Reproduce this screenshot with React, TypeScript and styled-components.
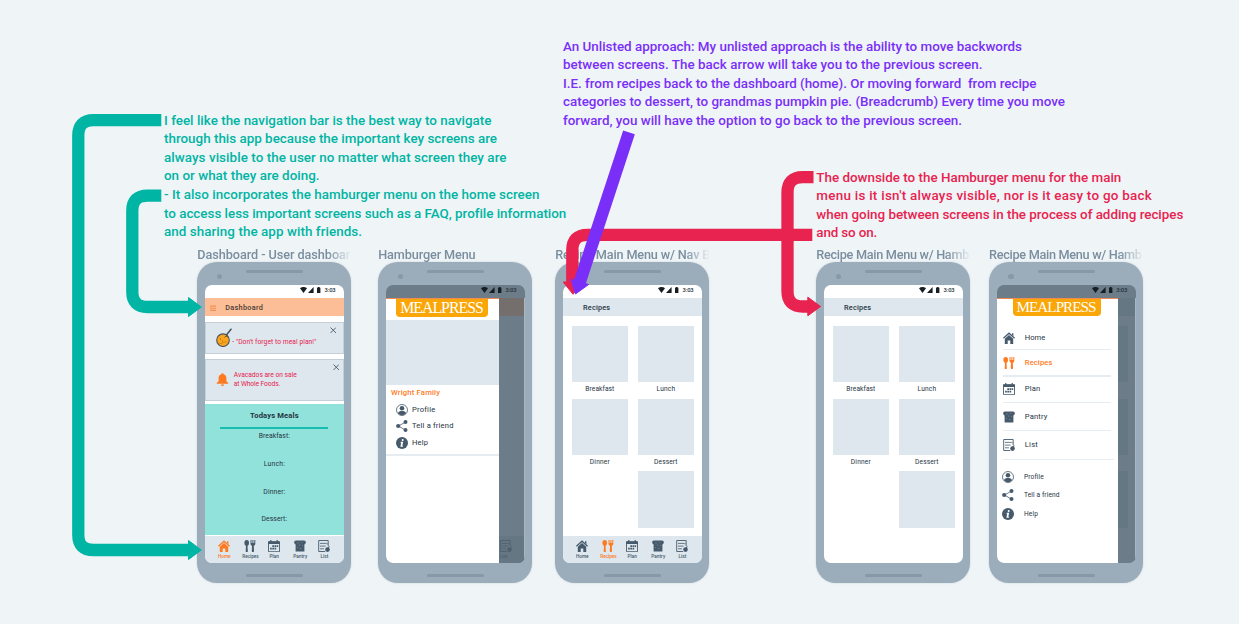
import React, { useLayoutEffect, useRef } from "react";
import styled, { createGlobalStyle, css } from "styled-components";

const GlobalStyle = createGlobalStyle`
  *, *::before, *::after { box-sizing: border-box; }
  body { margin: 0; background: #eff4f7; font-family: Roboto, "Liberation Sans", sans-serif; }
`;

const C = {
  teal: "#00b5a3",
  red: "#e8234f",
  purple: "#7a2ff9",
  orange: "#ff7a1f",
  slate: "#465a6b",
  ink: "#26333f",
  body: "#9badbb",
  tile: "#dde7ed",
};

const Board = styled.main`
  position: relative;
  width: 1239px;
  height: 624px;
  overflow: hidden;
  background: #eff4f7;
`;

/* Text */

const Run = styled.span<{ $size: number; $color?: string; $weight?: number; $serif?: boolean }>`
  display: inline-block;
  flex: none;
  white-space: pre;
  font-size: ${(p) => p.$size}px;
  font-weight: ${(p) => p.$weight ?? 500};
  color: ${(p) => p.$color ?? C.ink};
  ${(p) => p.$serif && css`font-family: "Liberation Serif", serif;`}
`;

type FitProps = { children: string; width: number; size: number; color?: string; weight?: number; serif?: boolean };

/* Tracks a run of text so that it spans the given width. */
function Fit({ children, width, size, color, weight, serif }: FitProps) {
  const ref = useRef<HTMLSpanElement>(null);
  useLayoutEffect(() => {
    const el = ref.current;
    if (!el) return;
    el.style.letterSpacing = "0px";
    const gap = (width - el.getBoundingClientRect().width) / Math.max(1, children.length - 1);
    el.style.letterSpacing = `${gap}px`;
    el.style.marginRight = `${-gap}px`;
  }, [children, width]);
  return (
    <Run ref={ref} $size={size} $color={color} $weight={weight} $serif={serif}>
      {children}
    </Run>
  );
}

const NoteBox = styled.section<{ $x: number; $y: number }>`
  position: absolute;
  left: ${(p) => p.$x}px;
  top: ${(p) => p.$y}px;
  display: flex;
  flex-direction: column;
  align-items: flex-start;
  line-height: 18.6px;
`;

function Note({ x, y, color, lines }: { x: number; y: number; color: string; lines: [string, number][] }) {
  return (
    <NoteBox $x={x} $y={y}>
      {lines.map(([text, width]) => (
        <Fit key={text} width={width} size={13.4} color={color}>{text}</Fit>
      ))}
    </NoteBox>
  );
}

/* Icons */

const Svg = styled.svg<{ $size: number }>`
  display: block;
  flex: none;
  width: ${(p) => p.$size}px;
  height: ${(p) => p.$size}px;
`;

type IconName = "home" | "recipes" | "plan" | "pantry" | "list" | "profile" | "share" | "help" | "bell" | "close" | "menu";

function Icon({ name, size = 12, color = C.slate }: { name: IconName; size?: number; color?: string }) {
  const stroke = { fill: "none", stroke: color };
  return (
    <Svg $size={size} viewBox="0 0 12 12" fill={color}>
      {name === "home" && (
        <>
          <path d="M.4 6.3 6 1.200l5.600 5.100" {...stroke} strokeWidth="1.300" />
          <path d="M9 1.200h1.400v3L9 3z" />
          <path d="M1.800 6.800 6 2.900l4.200 3.900V12H7.300V8.400H4.700V12H1.800z" />
        </>
      )}
      {name === "recipes" && (
        <>
          <ellipse cx="2.700" cy="2.900" rx="2.300" ry="2.800" />
          <path d="M2 5h1.500l.3 6.200a1 1 0 0 1-2.100 0z" />
          <path d="M6.500 0h1v3h.9V0h1v3h.9V0h1v3.400c0 1.200-.6 2-1.500 2.300l.2 5.400a1.100 1.100 0 0 1-2.200 0L8 5.700C7 5.400 6.500 4.600 6.500 3.400z" />
        </>
      )}
      {name === "plan" && (
        <>
          <path d="M.5 1.700h11v10H.5z" {...stroke} strokeWidth=".9" />
          <path d="M.3 1.400h11.400v2.500H.3z" />
          <path d="M2.200 0h1.200v2H2.200zM8.600 0h1.200v2H8.600z" />
          <path d="M4.300 5.200h1.700v1.700H4.300zM6.500 5.200h1.700v1.700H6.500zM8.700 5.200h1.500v1.700H8.700zM2.100 7.700h1.700v1.700H2.100zM4.300 7.700h1.700v1.700H4.300zM6.500 7.700h1.700v1.700H6.500z" />
        </>
      )}
      {name === "pantry" && (
        <>
          <path d="M2 .5h8c2.300 0 2.500 3.200.4 3.900V11.500H1.600V4.400C-.5 3.700-.3.5 2 .5z" />
          <g fill="#b9c6d0">
            <circle cx="4" cy="3" r=".45" /><circle cx="7.200" cy="2.600" r=".4" /><circle cx="5.800" cy="5" r=".45" />
            <circle cx="8.500" cy="5.600" r=".4" /><circle cx="3.800" cy="7.600" r=".4" /><circle cx="6.900" cy="8.500" r=".45" />
          </g>
        </>
      )}
      {name === "list" && (
        <>
          <path d="M10.200 6V.5H.7v11h6.500" {...stroke} strokeWidth=".9" />
          <path d="M2 3.400h6.300M2 6.100h5.600M2 8.800h4M9 2.900v1.500" {...stroke} strokeWidth=".8" />
          <circle cx="9.500" cy="9.600" r="2.300" />
          <path d="M9.300 7.500 11.600 5.700 11 8z" />
        </>
      )}
      {name === "profile" && (
        <>
          <circle cx="6" cy="6" r="5.500" {...stroke} strokeWidth=".8" />
          <circle cx="6" cy="4.300" r="2.300" />
          <path d="M2 9.300c.3-1.300 1.500-1.900 2.900-2.200h2.200c1.400.3 2.600.9 2.900 2.200-2 2.500-6 2.500-8 0z" />
        </>
      )}
      {name === "share" && (
        <>
          <path d="M9.300 2.200 2.400 6l6.900 4" {...stroke} strokeWidth=".8" />
          <circle cx="9.500" cy="2.100" r="2" /><circle cx="2.200" cy="6" r="2.100" /><circle cx="9.500" cy="9.900" r="2" />
        </>
      )}
      {name === "help" && (
        <>
          <circle cx="6" cy="6" r="6" />
          <g fill="#fff"><circle cx="6.700" cy="3" r="1" /><path d="M4.700 4.800h2.500L6.300 8.700h.9l-.4 1H4.400l.8-3.900h-.7z" /></g>
        </>
      )}
      {name === "bell" && (
        <>
          <path d="M6 .2c.6 0 1 .4 1 1 1.600.4 2.600 1.700 2.600 3.400v2.500c0 .9.700 1.200 1.700 2v.9H.7v-.9c1-.8 1.700-1.100 1.700-2V4.600C2.400 2.900 3.400 1.600 5 1.200c0-.6.4-1 1-1z" />
          <path d="M4.500 10.600h3a1.500 1.400 0 0 1-3 0z" />
        </>
      )}
      {name === "close" && <path d="m1 1 10 10M11 1 1 11" {...stroke} strokeWidth="1.700" />}
      {name === "menu" && <path d="M0 2h12M0 6h12M0 10h12" {...stroke} strokeWidth="2.300" />}
    </Svg>
  );
}

const PanSvg = styled.svg`
  display: block;
  flex: none;
  width: 16px;
  height: 19px;
`;

function Pan() {
  return (
    <PanSvg viewBox="0 0 16 19">
      <path d="M10 7.500 15 1.200" stroke="#4a5560" strokeWidth="1.500" strokeLinecap="round" />
      <circle cx="7" cy="12.200" r="6.300" fill="#fba61c" stroke="#4a5560" strokeWidth="1.100" />
      <path d="M8.500 9.500c.8-1.400 2.200-1.400 3.200-.5" stroke="#5c4a2a" strokeWidth=".8" fill="none" />
      <path d="M2.500 14.500c2 2 3.500 1.200 4.700.2s2.500-.4 3.600-1.200" stroke="#c9780f" strokeWidth=".7" fill="none" />
      <circle cx="4.500" cy="11" r=".6" fill="#6b4715" /><circle cx="6.500" cy="13" r=".5" fill="#6b4715" />
    </PanSvg>
  );
}

const StatusSvg = styled.svg`
  display: block;
  width: 21px;
  height: 6px;
  margin-right: 3.500px;
`;

const StatusRow = styled.div`
  flex: none;
  display: flex;
  align-items: center;
  justify-content: flex-end;
  height: 13px;
  padding: 0 8.200px 3px 0;
  line-height: 8px;
`;

function StatusBar() {
  return (
    <StatusRow>
      <StatusSvg viewBox="0 0 21 6" fill="#161d23">
        <path d="M0 1.200C2-.4 5-.4 7 1.200L3.500 5.900zM8 6l5.600-5.900V6zM17 .7h.8V0h1.800v.7h.8V6H17z" />
      </StatusSvg>
      <Fit width={11} size={5.800} color="#26313a">3:03</Fit>
    </StatusRow>
  );
}

/* Phone shell */

const Artboard = styled.section<{ $x: number }>`
  position: absolute;
  left: ${(p) => p.$x}px;
  top: 246px;
  width: 154px;
`;

const Title = styled.h2`
  margin: 0;
  height: 16px;
  line-height: 17px;
  display: flex;
  mask-image: linear-gradient(to right, #000 130px, transparent 155px);
`;

const Body = styled.div`
  display: flex;
  flex-direction: column;
  align-items: center;
  height: 321px;
  padding: 8px 7.500px 0;
  border-radius: 20px;
  background: ${C.body};
  box-shadow: 0 0 2px rgba(120, 140, 160, 0.35);
`;

const Earpiece = styled.div`
  width: 57px;
  height: 3px;
  border-radius: 1.500px;
  background: #8798a6;
`;

const Camera = styled.div`
  align-self: flex-start;
  width: 5.600px;
  height: 5.600px;
  margin: 0.500px 0 5.900px 11.900px;
  border-radius: 50%;
  background: #8798a6;
`;

const Screen = styled.div<{ $dim?: boolean }>`
  position: relative;
  display: flex;
  flex-direction: column;
  width: 139px;
  height: 278px;
  margin-bottom: 11px;
  border-radius: 7px;
  overflow: hidden;
  background: ${(p) => (p.$dim ? "#6c7c89" : "#fff")};
`;

function Phone({ x, title, titleWidth, dim, children }: { x: number; title: string; titleWidth: number; dim?: boolean; children: React.ReactNode }) {
  return (
    <Artboard $x={x}>
      <Title><Fit width={titleWidth} size={12.700} weight={500} color="#7a8e9f">{title}</Fit></Title>
      <Body>
        <Earpiece />
        <Camera />
        <Screen $dim={dim}>
          <StatusBar />
          {children}
        </Screen>
        <Earpiece />
      </Body>
    </Artboard>
  );
}

const AppBar = styled.header<{ $bg: string; $indent: number }>`
  flex: none;
  display: flex;
  align-items: center;
  gap: 9px;
  height: 18px;
  padding: 2px 0 0 ${(p) => p.$indent}px;
  line-height: 10px;
  background: ${(p) => p.$bg};
`;

/* Bottom navigation */

const NavBar = styled.nav`
  flex: none;
  display: flex;
  height: 27px;
  margin-top: auto;
  padding: 4px 0 0 6px;
  background: ${C.tile};
`;

const NavItem = styled.div<{ $w: number }>`
  flex: none;
  width: ${(p) => p.$w}px;
  display: flex;
  flex-direction: column;
  align-items: center;
  gap: 2.400px;
  line-height: 6px;
`;

const NAV: { icon: IconName; label: string; slot: number; text: number }[] = [
  { icon: "home", label: "Home", slot: 27, text: 12.500 },
  { icon: "recipes", label: "Recipes", slot: 25.400, text: 16.500 },
  { icon: "plan", label: "Plan", slot: 22, text: 9.500 },
  { icon: "pantry", label: "Pantry", slot: 30, text: 14 },
  { icon: "list", label: "List", slot: 18.400, text: 8 },
];

function BottomNav({ active }: { active: string }) {
  return (
    <NavBar>
      {NAV.map((n) => {
        const color = n.label === active ? C.orange : C.slate;
        return (
          <NavItem key={n.label} $w={n.slot}>
            <Icon name={n.icon} color={color} />
            <Fit width={n.text} size={4.700} color={color}>{n.label}</Fit>
          </NavItem>
        );
      })}
    </NavBar>
  );
}

/* Dashboard */

const Card = styled.div<{ $h: number; $top: number }>`
  flex: none;
  position: relative;
  display: flex;
  align-items: center;
  height: ${(p) => p.$h}px;
  margin-top: ${(p) => p.$top}px;
  padding-left: 10px;
  border: 1.500px solid #c3cfd9;
  background: ${C.tile};
`;

const Dismiss = styled.div<{ $right: number }>`
  position: absolute;
  top: 3.800px;
  right: ${(p) => p.$right}px;
`;

const CardText = styled.div<{ $ml: number; $mt: number }>`
  display: flex;
  flex-direction: column;
  align-items: flex-start;
  margin: ${(p) => p.$mt}px 0 0 ${(p) => p.$ml}px;
  line-height: 9px;
`;

const Meals = styled.div`
  flex: none;
  display: flex;
  flex-direction: column;
  align-items: center;
  height: 131px;
  margin-top: 3px;
  padding-top: 6px;
  background: #91e2db;
  line-height: 12px;
`;

const Rule = styled.div`
  width: 108px;
  height: 2px;
  margin: 5px 0 1px;
  background: #18bdb1;
`;

const MealList = styled.div`
  display: flex;
  flex-direction: column;
  align-items: center;
  gap: 15.800px;
`;

function Dashboard() {
  return (
    <Phone x={197.300} title="Dashboard - User dashboar" titleWidth={153}>
      <AppBar $bg="#fcbe97" $indent={5}>
        <Icon name="menu" size={6.500} color="#f5914f" />
        <Fit width={37.500} size={7.300} color="#4b3c34">Dashboard</Fit>
      </AppBar>
      <Card $h={32} $top={6}>
        <Pan />
        <CardText $ml={0.500} $mt={10}>
          <Fit width={84} size={6.700} weight={400} color={C.red}>- "Don't forget to meal plan!"</Fit>
        </CardText>
        <Dismiss $right={6.800}><Icon name="close" size={6.500} /></Dismiss>
      </Card>
      <Card $h={42} $top={5}>
        <Icon name="bell" size={13} color={C.orange} />
        <CardText $ml={5} $mt={0}>
          <Fit width={63} size={6.700} weight={400} color={C.red}>Avacados are on sale</Fit>
          <Fit width={46.500} size={6.700} weight={400} color={C.red}>at Whole Foods.</Fit>
        </CardText>
        <Dismiss $right={3.800}><Icon name="close" size={6.500} /></Dismiss>
      </Card>
      <Meals>
        <Fit width={48.500} size={7.600} weight={700}>Todays Meals</Fit>
        <Rule />
        <MealList>
          <Fit width={31} size={6.800} weight={400}>Breakfast:</Fit>
          <Fit width={21} size={6.800} weight={400}>Lunch:</Fit>
          <Fit width={22} size={6.800} weight={400}>Dinner:</Fit>
          <Fit width={25.500} size={6.800} weight={400}>Dessert:</Fit>
        </MealList>
      </Meals>
      <BottomNav active="Home" />
    </Phone>
  );
}

/* Recipes */

const TileGrid = styled.div`
  flex: none;
  display: grid;
  grid-template-columns: 56px 56px;
  column-gap: 10px;
  padding: 10px 9px 0;
`;

const TileCell = styled.div<{ $last?: boolean }>`
  display: flex;
  flex-direction: column;
  align-items: center;
  gap: 0.800px;
  height: ${(p) => (p.$last ? 56.400 : 72.600)}px;
  line-height: 12px;
  ${(p) => p.$last && css`grid-column: 2;`}
`;

const Tile = styled.div`
  flex: none;
  width: 56px;
  height: 56.400px;
  background: ${C.tile};
`;

const TILES: [string, number][] = [["Breakfast", 29], ["Lunch", 18.500], ["Dinner", 20], ["Dessert", 23.500]];

function Recipes({ x, title, titleWidth, nav }: { x: number; title: string; titleWidth: number; nav?: boolean }) {
  return (
    <Phone x={x} title={title} titleWidth={titleWidth}>
      <AppBar $bg={C.tile} $indent={20.300}>
        <Fit width={27} size={7.300}>Recipes</Fit>
      </AppBar>
      <TileGrid>
        {TILES.map(([label, width]) => (
          <TileCell key={label}>
            <Tile />
            <Fit width={width} size={6.600} weight={400}>{label}</Fit>
          </TileCell>
        ))}
        <TileCell $last><Tile /></TileCell>
      </TileGrid>
      {nav && <BottomNav active="Recipes" />}
    </Phone>
  );
}

/* Drawers */

const DimRow = styled.div`
  display: flex;
  height: 265px;
`;

const Drawer = styled.aside<{ $w: number }>`
  flex: none;
  display: flex;
  flex-direction: column;
  width: ${(p) => p.$w}px;
  background: #fff;
  border-top: 1px solid #ef8a55;
`;

const Logo = styled.div<{ $w: number; $h: number; $ml: number }>`
  flex: none;
  display: flex;
  align-items: center;
  justify-content: center;
  width: ${(p) => p.$w}px;
  height: ${(p) => p.$h}px;
  margin-left: ${(p) => p.$ml}px;
  border-radius: 0 0 4px 4px;
  background: #f9a606;
  line-height: 18px;
`;

const Photo = styled.div`
  flex: none;
  height: 64.700px;
  margin-top: 3px;
  background: ${C.tile};
`;

const Family = styled.div`
  flex: none;
  display: flex;
  align-items: flex-start;
  height: 16.300px;
  padding: 3.300px 0 0 5.300px;
  line-height: 10px;
`;

const Entry = styled.div<{ $h: number; $pad: number; $gap: number }>`
  flex: none;
  display: flex;
  align-items: center;
  gap: ${(p) => p.$gap}px;
  height: ${(p) => p.$h}px;
  padding-left: ${(p) => p.$pad}px;
  line-height: 10px;
`;

const Divider = styled.div<{ $w: number; $ml?: number; $mt?: number }>`
  flex: none;
  width: ${(p) => p.$w}px;
  height: 1.600px;
  margin: ${(p) => p.$mt ?? 0}px 0 0 ${(p) => p.$ml ?? 0}px;
  background: #e6edf2;
`;

const Behind = styled.div`
  flex: 1;
  display: flex;
  flex-direction: column;
  overflow: hidden;
  border-right: 1px solid #aab6c0;
`;

const BehindBar = styled.div<{ $bg: string }>`
  flex: none;
  height: 18px;
  background: ${(p) => p.$bg};
`;

const BehindNav = styled.div`
  display: flex;
  flex-direction: column;
  align-items: flex-start;
  gap: 2.400px;
  height: 27px;
  margin-top: auto;
  padding: 4px 0 0 0.500px;
  line-height: 6px;
  background: #667784;
`;

const BehindTile = styled.div`
  flex: none;
  width: 10px;
  height: 56.400px;
  margin-bottom: 16.200px;
  background: #667784;
`;

const BehindTiles = styled.div`
  padding-top: 10px;
`;

function HamburgerMenu() {
  return (
    <Phone x={378.200} title="Hamburger Menu" titleWidth={97.500} dim>
      <DimRow>
        <Drawer $w={113.500}>
          <Logo $w={92} $h={18.500} $ml={10.300}><Fit serif width={83.500} size={15.800} weight={400} color="#fff">MEALPRESS</Fit></Logo>
          <Photo />
          <Family><Fit width={49} size={7.600} color={C.orange}>Wright Family</Fit></Family>
          <Entry $h={16.300} $pad={10.300} $gap={4}><Icon name="profile" /><Fit width={23} size={7.600} weight={400}>Profile</Fit></Entry>
          <Entry $h={16.300} $pad={10.300} $gap={4}><Icon name="share" /><Fit width={41.500} size={7.600} weight={400}>Tell a friend</Fit></Entry>
          <Entry $h={17} $pad={10.300} $gap={4}><Icon name="help" /><Fit width={16} size={7.600} weight={400}>Help</Fit></Entry>
          <Divider $w={113.500} $mt={3.300} />
        </Drawer>
        <Behind>
          <BehindBar $bg="#746f6d" />
          <BehindNav>
            <Icon name="list" color="#4f606d" />
            <Fit width={8} size={4.700} color="#4f606d">List</Fit>
          </BehindNav>
        </Behind>
      </DimRow>
    </Phone>
  );
}

const MAIN_ENTRIES: { icon: IconName; label: string; h: number; text: number; rule: number }[] = [
  { icon: "home", label: "Home", h: 22, text: 20.500, rule: 108 },
  { icon: "recipes", label: "Recipes", h: 25.200, text: 27.500, rule: 108 },
  { icon: "plan", label: "Plan", h: 24.800, text: 15.500, rule: 108 },
  { icon: "pantry", label: "Pantry", h: 26.400, text: 22.500, rule: 108 },
  { icon: "list", label: "List", h: 27.400, text: 13, rule: 111 },
];

const EntryGroup = styled.div<{ $top: number }>`
  display: flex;
  flex-direction: column;
  padding-top: ${(p) => p.$top}px;
`;

function RecipeDrawer() {
  return (
    <Phone x={989} title="Recipe Main Menu w/ Hamb" titleWidth={153} dim>
      <DimRow>
        <Drawer $w={121}>
          <Logo $w={88} $h={17} $ml={16}><Fit serif width={80} size={15.200} weight={400} color="#fff">MEALPRESS</Fit></Logo>
          <EntryGroup $top={10.700}>
            {MAIN_ENTRIES.map((e) => (
              <React.Fragment key={e.label}>
                <Entry $h={e.h} $pad={6.300} $gap={10}>
                  <Icon name={e.icon} color={e.label === "Recipes" ? C.orange : C.slate} />
                  <Fit width={e.text} size={7.600} weight={e.label === "Recipes" ? 500 : 400} color={e.label === "Recipes" ? C.orange : C.ink}>{e.label}</Fit>
                </Entry>
                <Divider $ml={6} $w={e.rule} />
              </React.Fragment>
            ))}
          </EntryGroup>
          <EntryGroup $top={7}>
            <Entry $h={18.500} $pad={5.500} $gap={10}><Icon name="profile" /><Fit width={19.500} size={6.600} weight={400}>Profile</Fit></Entry>
            <Entry $h={18.500} $pad={5.500} $gap={10}><Icon name="share" /><Fit width={35.500} size={6.600} weight={400}>Tell a friend</Fit></Entry>
            <Entry $h={18.500} $pad={5.500} $gap={10}><Icon name="help" /><Fit width={14} size={6.600} weight={400}>Help</Fit></Entry>
          </EntryGroup>
        </Drawer>
        <Behind>
          <BehindBar $bg="#667784" />
          <BehindTiles><BehindTile /><BehindTile /><BehindTile /></BehindTiles>
        </Behind>
      </DimRow>
    </Phone>
  );
}

/* Connectors drawn over the artboards */

const ArrowLayer = styled.svg`
  position: absolute;
  left: 0;
  top: 0;
  pointer-events: none;
`;

function Arrows() {
  return (
    <ArrowLayer width="1239" height="624" viewBox="0 0 1239 624" fill="none" strokeWidth="12.300">
      <g stroke={C.teal}>
        <path d="M161.300 120.200H93.500Q78.300 120.200 78.300 135.400V535Q78.300 550 93.500 550H189" />
        <path d="M161.300 195.600H147.500Q132.300 195.600 132.300 210.800V291.800Q132.300 307 147.500 307H189" />
      </g>
      <g fill={C.teal} stroke={C.teal} strokeWidth="1" strokeLinejoin="round">
        <path d="M188.500 540.500 201.300 550 188.500 559.500zM188.500 297.500 201.300 307 188.500 316.500z" />
      </g>
      <g stroke={C.red}>
        <path d="M813.500 177.200H802.700Q787.500 177.200 787.500 192.400V291.300Q787.500 306.500 802.700 306.500H809" />
        <path d="M812.300 234.800H587.500Q572.300 234.800 572.300 250V283" />
      </g>
      <g fill={C.red} stroke={C.red} strokeWidth="1" strokeLinejoin="round">
        <path d="M807.800 297.200 820.600 306.500 807.800 315.800zM563.200 282 581.500 282 573 294.300z" />
      </g>
      <path d="M629 132.300 579.500 283" stroke={C.purple} />
      <path d="M571 279.400 588.600 284.500 575.500 294z" fill={C.purple} stroke={C.purple} strokeWidth="1" strokeLinejoin="round" />
    </ArrowLayer>
  );
}

export default function App() {
  return (
    <Board>
      <GlobalStyle />
      <Dashboard />
      <HamburgerMenu />
      <Recipes x={555.300} title="Recipe Main Menu w/ Nav B" titleWidth={155} nav />
      <Recipes x={816.300} title="Recipe Main Menu w/ Hamb" titleWidth={153} />
      <RecipeDrawer />
      <Arrows />
      <Note
        x={563} y={37.700} color={C.purple}
        lines={[
          ["An Unlisted approach: My unlisted approach is the ability to move backwords", 459],
          ["between screens. The back arrow will take you to the previous screen.", 419.500],
          ["I.E. from recipes back to the dashboard (home). Or moving forward  from recipe", 473.500],
          ["categories to dessert, to grandmas pumpkin pie. (Breadcrumb) Every time you move", 502],
          ["forward, you will have the option to go back to the previous screen.", 399],
        ]}
      />
      <Note
        x={164} y={111.700} color={C.teal}
        lines={[
          ["I feel like the navigation bar is the best way to navigate", 327.500],
          ["through this app because the important key screens are", 333],
          ["always visible to the user no matter what screen they are", 342.500],
          ["on or what they are doing.", 155.500],
          ["- It also incorporates the hamburger menu on the home screen", 375.500],
          ["to access less important screens such as a FAQ, profile information", 402],
          ["and sharing the app with friends.", 198],
        ]}
      />
      <Note
        x={816.300} y={168.700} color={C.red}
        lines={[
          ["The downside to the Hamburger menu for the main", 305],
          ["menu is it isn't always visible, nor is it easy to go back", 335.500],
          ["when going between screens in the process of adding recipes", 367],
          ["and so on.", 61],
        ]}
      />
    </Board>
  );
}
